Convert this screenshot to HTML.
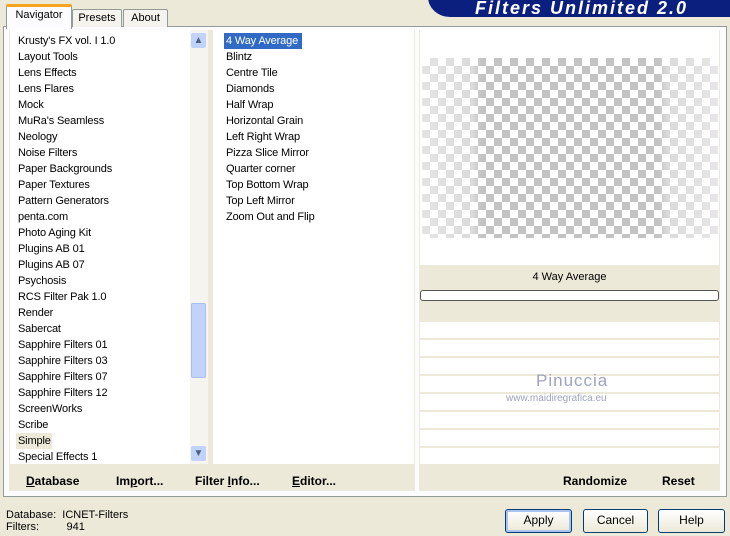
<!DOCTYPE html><html><head><style>
body{margin:0;width:730px;height:536px;background:#ece9d8;font-family:"Liberation Sans",sans-serif;font-size:11px;position:relative;overflow:hidden;color:#000}
.a{position:absolute}
.tab{position:absolute;border:1px solid #919b9c;border-bottom:none;background:#f4f3ee;text-align:center;line-height:17px;font-size:11px;border-radius:2px 2px 0 0}
.list div{height:16px;line-height:16px;padding-left:2px;white-space:nowrap;letter-spacing:-0.15px}
.btn{position:absolute;border:1px solid #003c74;border-radius:3px;background:linear-gradient(#fff,#ece9d8);text-align:center;line-height:21px;font-size:12px}
.bb{position:absolute;font-weight:bold;font-size:12px;top:474px}
</style></head><body>
<div class="a" style="left:428px;top:-10px;width:320px;height:27px;background:#0a1f7e;border-radius:0 0 0 22px / 0 0 0 20px"></div>
<div class="a" style="left:475px;top:-2px;color:#fff;font-weight:bold;font-style:italic;font-size:18px;letter-spacing:2px">Filters Unlimited 2.0</div>
<div class="a" style="left:3px;top:26px;width:722px;height:469px;border:1px solid #919b9c;background:#fcfcfe"></div>
<div class="tab" style="left:72px;top:9px;width:48px;height:17px">Presets</div>
<div class="tab" style="left:123px;top:9px;width:43px;height:17px">About</div>
<div class="tab" style="left:6px;top:4px;width:64px;height:22px;background:#fcfcfe;border-top:3px solid #f7a41d;line-height:16px">Navigator</div>
<div class="a" style="left:9px;top:30px;width:406px;height:461px;background:#ece9d8"></div>
<div class="a list" style="left:10px;top:30px;width:180px;height:434px;background:#fff;padding-top:3px;box-sizing:border-box;padding-left:6px">
<div>Krusty's FX vol. I 1.0</div><div>Layout Tools</div><div>Lens Effects</div><div>Lens Flares</div><div>Mock</div><div>MuRa's Seamless</div><div>Neology</div><div>Noise Filters</div><div>Paper Backgrounds</div><div>Paper Textures</div><div>Pattern Generators</div><div>penta.com</div><div>Photo Aging Kit</div><div>Plugins AB 01</div><div>Plugins AB 07</div><div>Psychosis</div><div>RCS Filter Pak 1.0</div><div>Render</div><div>Sabercat</div><div>Sapphire Filters 01</div><div>Sapphire Filters 03</div><div>Sapphire Filters 07</div><div>Sapphire Filters 12</div><div>ScreenWorks</div><div>Scribe</div><div style="background:#ece9d8;width:34px">Simple</div><div>Special Effects 1</div></div>
<div class="a" style="left:190px;top:30px;width:18px;height:434px;background:#f5f4ef"></div>
<div class="a" style="left:191px;top:33px;width:15px;height:15px;background:#c1d3fb;border-radius:2px;color:#4d6185;font-size:10px;text-align:center;line-height:15px">▲</div>
<div class="a" style="left:191px;top:446px;width:15px;height:15px;background:#c1d3fb;border-radius:2px;color:#4d6185;font-size:10px;text-align:center;line-height:15px">▼</div>
<div class="a" style="left:191px;top:303px;width:15px;height:75px;background:#c1d3fb;border:1px solid #a9bef0;box-sizing:border-box;border-radius:2px"></div>
<div class="a list" style="left:213px;top:30px;width:201px;height:434px;background:#fff;padding:3px 0 0 11px;box-sizing:border-box">
<div style="background:#316ac5;color:#fff;width:76px">4 Way Average</div><div>Blintz</div><div>Centre Tile</div><div>Diamonds</div><div>Half Wrap</div><div>Horizontal Grain</div><div>Left Right Wrap</div><div>Pizza Slice Mirror</div><div>Quarter corner</div><div>Top Bottom Wrap</div><div>Top Left Mirror</div><div>Zoom Out and Flip</div></div>
<div class="bb" style="left:26px"><u>D</u>atabase</div><div class="bb" style="left:116px">Im<u>p</u>ort...</div><div class="bb" style="left:195px">Filter <u>I</u>nfo...</div><div class="bb" style="left:292px"><u>E</u>ditor...</div>
<div class="a" style="left:419px;top:30px;width:301px;height:461px;background:#ece9d8"></div>
<div class="a" style="left:420px;top:30px;width:299px;height:235px;background:#fff"></div>
<div class="a" style="left:422px;top:58px;width:296px;height:180px;background:repeating-conic-gradient(#c3c3c3 0 25%,#fff 0 50%) 0 0/16px 16px"></div>
<div class="a" style="left:422px;top:58px;width:296px;height:180px;background:linear-gradient(90deg,rgba(255,255,255,.55),rgba(255,255,255,.4) 17%,rgba(255,255,255,0) 20%,rgba(255,255,255,0) 80%,rgba(255,255,255,.4) 83%,rgba(255,255,255,.6))"></div>
<div class="a" style="left:420px;top:271px;width:299px;text-align:center;font-size:11px">4 Way Average</div>
<div class="a" style="left:420px;top:290px;width:297px;height:9px;border:1px solid #555;border-radius:3px;background:#fff"></div>
<div class="a" style="left:420px;top:322px;width:299px;height:142px;background:repeating-linear-gradient(#fff 0 16px,#ece9d8 16px 18px)"></div>
<div class="a" style="left:536px;top:371px;color:#9ea3bf;font-size:17px;letter-spacing:1px">Pinuccia</div>
<div class="a" style="left:506px;top:393px;color:#9ea3bf;font-size:10px">www.maidiregrafica.eu</div>
<div class="bb" style="left:563px">Randomize</div><div class="bb" style="left:662px">Reset</div>
<div class="a" style="left:6px;top:509px;line-height:12px;font-size:11px">Database:&nbsp;&nbsp;ICNET-Filters<br>Filters:&nbsp;&nbsp;&nbsp;&nbsp;&nbsp;&nbsp;&nbsp;&nbsp;&nbsp;941</div>
<div class="btn" style="left:505px;top:509px;width:65px;height:22px;box-shadow:inset 0 0 0 2px #a8c4f0">Apply</div>
<div class="btn" style="left:583px;top:509px;width:63px;height:22px">Cancel</div>
<div class="btn" style="left:658px;top:509px;width:65px;height:22px">Help</div>
</body></html>
